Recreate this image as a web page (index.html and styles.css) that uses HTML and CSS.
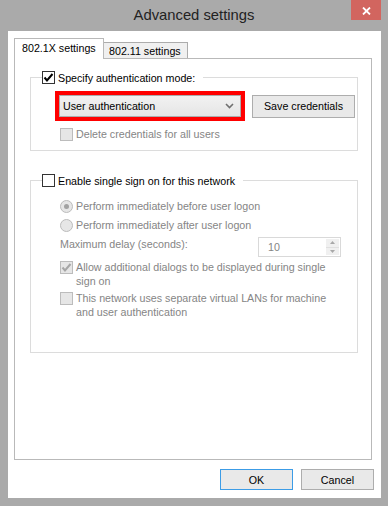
FILE: index.html
```html
<!DOCTYPE html>
<html lang="en">
<head>
  <meta charset="UTF-8" />
  <title>Advanced settings</title>
  <link rel="stylesheet" href="styles.css">
</head>
<body>

  <div class="window">
    <div class="titlebar">
      <span></span>
      <span class="title">Advanced settings</span>
      <span class="close">
        <svg width="9" height="8" viewBox="0 0 9 8"><path d="M1 0.5 L8 7.5 M8 0.5 L1 7.5" stroke="#fff" stroke-width="1.8"/></svg>
      </span>
    </div>

    <div class="client">
      <div class="tabs">
        <div class="tab active">802.1X settings</div>
        <div class="tab">802.11 settings</div>
      </div>

      <div class="panel">
        <fieldset class="group">
          <legend><span class="check"><svg width="11" height="11" viewBox="0 0 11 11"><path d="M1.5 5.5 L4 8.5 L9.5 2" fill="none" stroke="#000" stroke-width="2"/></svg></span>Specify authentication mode:</legend>
          <div class="group-body auth-body">
            <div class="mode-row">
              <div class="highlight">
                <div class="combo">
                  <span>User authentication</span>
                  <svg width="9" height="6" viewBox="0 0 9 6"><path d="M1 1 L4.5 4.5 L8 1" fill="none" stroke="#707070" stroke-width="1.6"/></svg>
                </div>
              </div>
              <button class="btn save-btn">Save credentials</button>
            </div>
            <div class="option disabled delete-row">
              <span class="check"></span>
              <span class="text">Delete credentials for all users</span>
            </div>
          </div>
        </fieldset>

        <fieldset class="group sso">
          <legend><span class="check"></span>Enable single sign on for this network</legend>
          <div class="group-body sso-body">
            <div class="option disabled radio-row">
              <span class="radio on"></span>
              <span class="text">Perform immediately before user logon</span>
            </div>
            <div class="option disabled radio-row">
              <span class="radio"></span>
              <span class="text">Perform immediately after user logon</span>
            </div>
            <div class="delay-row disabled">
              <span class="text">Maximum delay (seconds):</span>
              <div class="spin">
                <span class="spin-value">10</span>
                <div class="spin-arrows">
                  <span><svg width="5" height="3" viewBox="0 0 5 3"><path d="M0 3 L2.5 0 L5 3 Z" fill="#a8a8a8"/></svg></span>
                  <span><svg width="5" height="3" viewBox="0 0 5 3"><path d="M0 0 L2.5 3 L5 0 Z" fill="#a8a8a8"/></svg></span>
                </div>
              </div>
            </div>
            <div class="option disabled multi">
              <span class="check"><svg width="11" height="11" viewBox="0 0 11 11"><path d="M1.5 5.5 L4 8.5 L9.5 2" fill="none" stroke="#a6a6a6" stroke-width="2"/></svg></span>
              <span class="text">Allow additional dialogs to be displayed during single sign on</span>
            </div>
            <div class="option disabled multi">
              <span class="check"></span>
              <span class="text">This network uses separate virtual LANs for machine and user authentication</span>
            </div>
          </div>
        </fieldset>
      </div>

      <div class="buttons">
        <button class="btn default">OK</button>
        <button class="btn">Cancel</button>
      </div>
    </div>
  </div>

</body>
</html>
```

FILE: styles.css
```css
:root {
  --frame: #aaaaaa;
  --border: #b9b9b9;
  --group: #dcdcdc;
  --gray-text: #858585;
}

* {
  box-sizing: border-box;
}

body {
  margin: 0;
  background: var(--frame);
  font-family: "Liberation Sans", Arial, sans-serif;
  font-size: 10.7px;
  color: #000;
}

.window {
  width: 388px;
  height: 506px;
}

.titlebar {
  display: grid;
  grid-template-columns: 1fr auto 1fr;
  height: 31px;
  padding: 0 7px;
}

.title {
  font-size: 14.8px;
  line-height: 30px;
  color: #222;
}

.close {
  justify-self: end;
  width: 30px;
  height: 20px;
  background: #d2655f;
  display: flex;
  align-items: center;
  justify-content: center;
  padding-top: 2px;
}

.client {
  display: flex;
  flex-direction: column;
  height: 467px;
  margin: 0 7px 0 8px;
  padding: 7px 9px 8px 6px;
  background: #fff;
}

.tabs {
  display: flex;
  align-items: flex-end;
  height: 21px;
  margin-bottom: -1px;
}

.tab {
  height: 17px;
  width: 84px;
  padding-left: 5px;
  line-height: 17px;
  background: #f0f0f0;
  border: 1px solid #acacac;
  border-bottom: none;
  border-left: none;
}

.tab.active {
  position: relative;
  z-index: 1;
  height: 21px;
  width: 90px;
  padding-left: 7px;
  line-height: 19px;
  background: #fff;
  border: 1px solid var(--border);
  border-bottom: none;
}

.panel {
  height: 402px;
  padding: 0 13px 0 15px;
  border: 1px solid var(--border);
}

.group {
  margin: 11px 0 0;
  padding: 0;
  border: 1px solid var(--group);
  min-inline-size: 0;
}

.group legend {
  display: flex;
  align-items: center;
  height: 15px;
  margin-left: 11px;
  padding: 0 8px 0 0;
  gap: 3px;
}

.group.sso {
  margin-top: 22px;
}

.group-body {
  padding-left: 24px;
}

.auth-body {
  padding-top: 6px;
  padding-bottom: 8px;
}

.sso-body {
  padding-top: 11px;
  padding-right: 16px;
  padding-bottom: 33px;
}

.check {
  flex: none;
  width: 13px;
  height: 13px;
  border: 1px solid #333;
  background: #fff;
  display: flex;
  align-items: center;
  justify-content: center;
}

.disabled .check {
  border-color: #bcbcbc;
  background: #e6e6e6;
}

.mode-row {
  display: flex;
  align-items: center;
  gap: 7px;
}

.highlight {
  width: 190px;
  height: 30px;
  border: 4px solid #ff0000;
}

.combo {
  height: 100%;
  display: flex;
  align-items: center;
  justify-content: space-between;
  padding: 0 6px 0 3px;
  border: 1px solid #acacac;
  background: linear-gradient(#f2f2f2, #e5e5e5);
}

.btn {
  font: inherit;
  color: #000;
  height: 21px;
  width: 73px;
  padding: 0;
  background: #e9e9e9;
  border: 1px solid #adadad;
}

.save-btn {
  width: 103px;
  height: 23px;
}

.btn.default {
  border-color: #3c9ce6;
}

.option {
  display: flex;
  align-items: center;
  gap: 3px;
  margin-left: 5px;
  line-height: 15px;
}

.disabled .text {
  color: var(--gray-text);
}

.delete-row {
  margin-top: 6px;
}

.radio-row + .radio-row {
  margin-top: 4px;
}

.radio {
  flex: none;
  width: 13px;
  height: 13px;
  border: 1px solid #bcbcbc;
  border-radius: 50%;
  background: #e6e6e6;
  display: flex;
  align-items: center;
  justify-content: center;
}

.radio.on::after {
  content: "";
  width: 5px;
  height: 5px;
  border-radius: 50%;
  background: #a2a2a2;
}

.delay-row {
  display: flex;
  justify-content: space-between;
  align-items: flex-start;
  margin: 4px 0 0 5px;
  line-height: 15px;
}

.spin {
  display: flex;
  width: 83px;
  height: 20px;
  border: 1px solid #d9d9d9;
}

.spin-value {
  flex: 1;
  padding-left: 9px;
  line-height: 18px;
  color: var(--gray-text);
}

.spin-arrows {
  display: flex;
  flex-direction: column;
  width: 15px;
  padding: 1px;
}

.spin-arrows span {
  flex: 1;
  display: flex;
  align-items: center;
  justify-content: center;
  background: #f0f0f0;
}

.spin-arrows span + span {
  border-top: 1px solid #e0e0e0;
}

.multi {
  align-items: flex-start;
  margin-top: 3px;
  line-height: 14px;
}

.multi .check {
  margin-top: 1px;
}

.buttons {
  display: flex;
  justify-content: flex-end;
  gap: 8px;
  margin: 9px -2px 0 0;
}
```
